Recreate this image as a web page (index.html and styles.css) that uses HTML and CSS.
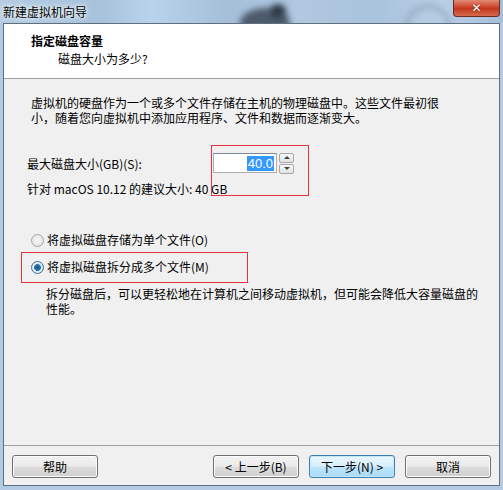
FILE: index.html
```html
<!DOCTYPE html>
<html lang="zh">
<head>
<meta charset="utf-8">
<title>新建虚拟机向导</title>
<link rel="stylesheet" href="styles.css">
</head>
<body>
<div class="app">
  <div class="titlebar">
    <span class="title">新建虚拟机向导</span>
    <div class="blob b1"></div>
    <div class="blob b2"></div>
    <div class="blob b3"></div>
    <div class="close"><span>✕</span></div>
  </div>
  <div class="window">
    <div class="header">
      <div class="h-title">指定磁盘容量</div>
      <div class="h-sub">磁盘大小为多少?</div>
    </div>
    <div class="body">
      <p class="intro">虚拟机的硬盘作为一个或多个文件存储在主机的物理磁盘中。这些文件最初很<br>小，随着您向虚拟机中添加应用程序、文件和数据而逐渐变大。</p>
      <div class="size-row">
        <span class="label">最大磁盘大小(GB)(S):</span>
        <div class="spin">
          <div class="spin-input"><span class="sel">40.0</span></div>
          <div class="spin-btns">
            <div class="sbtn"><span class="tri up"></span></div>
            <div class="sbtn"><span class="tri down"></span></div>
          </div>
        </div>
      </div>
      <div class="hint">针对 macOS 10.12 的建议大小: 40 GB</div>
      <div class="radio r1"><span class="dot"></span>将虚拟磁盘存储为单个文件(O)</div>
      <div class="radio r2"><span class="dot on"></span>将虚拟磁盘拆分成多个文件(M)</div>
      <p class="desc">拆分磁盘后，可以更轻松地在计算机之间移动虚拟机，但可能会降低大容量磁盘的<br>性能。</p>
    </div>
    <div class="footer">
      <button class="btn help">帮助</button>
      <div class="spacer"></div>
      <button class="btn">&lt; 上一步(B)</button>
      <button class="btn primary">下一步(N) &gt;</button>
      <button class="btn">取消</button>
    </div>
  </div>
  <div class="mark m1"></div>
  <div class="mark m2"></div>
</div>
</body>
</html>
```
FILE: styles.css
```css
html, body {
  margin: 0;
  padding: 0;
}
body {
  width: 503px;
  height: 490px;
  overflow: hidden;
  font-family: "Noto Sans CJK SC", "Liberation Sans", sans-serif;
  font-size: 12px;
  color: #000;
}
.app {
  position: relative;
  width: 503px;
  height: 490px;
  display: flex;
  flex-direction: column;
  background: #b3cbe2;
}
.titlebar {
  position: relative;
  height: 23px;
  flex: none;
  background: linear-gradient(90deg, #b5cce2 0%, #a8c2dc 20%, #b9d3ec 30%, #a5bfd9 45%, #b0c8e0 60%, #a9c3dc 75%, #b8cfe6 88%, #a6bfd8 100%);
  overflow: hidden;
}
.title {
  position: absolute;
  left: 3px;
  top: 3px;
  line-height: 18px;
  font-size: 12px;
  color: #000;
  text-shadow: 0 0 6px #fff, 0 0 4px #fff;
  z-index: 2;
}
.blob {
  position: absolute;
  border-radius: 50%;
  filter: blur(3px);
}
.b1 { left: 240px; top: 8px; width: 50px; height: 30px; background: #4d5b6c; }
.b2 { left: 270px; top: 4px; width: 16px; height: 14px; background: #2f3a48; }
.b3 { left: 405px; top: 5px; width: 40px; height: 40px; background: transparent; border: 3px solid #8aa0b5; }
.close {
  position: absolute;
  right: 3px;
  top: -3px;
  width: 45px;
  height: 19px;
  border: 1px solid #6b2a22;
  border-top: none;
  border-radius: 0 0 4px 4px;
  background: linear-gradient(180deg, #e8a796 0%, #d4553c 45%, #c2381f 60%, #d66a4d 100%);
  display: flex;
  align-items: center;
  justify-content: center;
  z-index: 2;
}
.close span {
  color: #fff;
  font-family: "DejaVu Sans", sans-serif;
  font-size: 12px;
  font-weight: bold;
  line-height: 12px;
  margin-top: 3px;
  text-shadow: 0 0 2px #602015;
}
.window {
  flex: 1;
  margin: 0 3px 4px 3px;
  display: flex;
  flex-direction: column;
  border: 1px solid #5e6f80;
  background: #f0f0f0;
}
.header {
  height: 55px;
  flex: none;
  background: #fff;
  border-bottom: 1px solid #a0a0a0;
  box-sizing: border-box;
  padding: 8px 0 0 27px;
}
.h-title {
  font-weight: bold;
  line-height: 17px;
  font-size: 12px;
}
.h-sub {
  padding-left: 27px;
  line-height: 18px;
  margin-top: 1px;
}
.body {
  flex: 1;
  padding: 16px 0 0 27px;
  display: flex;
  flex-direction: column;
  align-items: flex-start;
}
.intro, .desc {
  margin: 0;
  line-height: 15px;
}
.size-row {
  margin: 28px 0 0 -4px;
  display: flex;
  align-items: center;
  height: 20px;
}
.label {
  width: 186px;
  line-height: 15px;
}
.spin {
  display: flex;
  align-items: center;
  gap: 2px;
}
.spin-input {
  width: 60px;
  height: 18px;
  border: 1px solid #abadb3;
  border-top-color: #7a8897;
  background: #fff;
  display: flex;
  align-items: center;
  justify-content: flex-end;
  padding-right: 2px;
  box-sizing: content-box;
}
.sel {
  background: #3399ff;
  color: #fff;
  line-height: 15px;
  padding: 0 1px;
  font-family: "Liberation Sans", sans-serif;
  font-size: 13px;
}
.spin-btns {
  display: flex;
  flex-direction: column;
  gap: 1px;
}
.sbtn {
  width: 13px;
  height: 8px;
  border: 1px solid #a8a8a8;
  border-radius: 2px;
  background: linear-gradient(180deg, #f8f8f8, #e2e2e2);
  display: flex;
  align-items: center;
  justify-content: center;
}
.tri {
  width: 0;
  height: 0;
  border-left: 3px solid transparent;
  border-right: 3px solid transparent;
}
.tri.up { border-bottom: 3px solid #444; }
.tri.down { border-top: 3px solid #444; }
.hint {
  margin: 8px 0 0 -4px;
  line-height: 16px;
}
.radio {
  display: flex;
  align-items: center;
  line-height: 16px;
}
.r1 { margin-top: 35px; }
.r2 { margin-top: 11px; }
.dot {
  width: 11px;
  height: 11px;
  border-radius: 50%;
  border: 1px solid #a5a5a5;
  background: radial-gradient(circle, #f4f4f4 0%, #e2e2e2 100%);
  margin-right: 3px;
  box-sizing: content-box;
  display: inline-block;
}
.dot.on {
  border-color: #3c6d8f;
  background: radial-gradient(circle, #1d4f79 0%, #2a7bb6 40%, #dbe7f0 48%, #f3f3f3 100%);
}
.desc {
  margin-top: 11px;
  padding-left: 15px;
}
.footer {
  flex: none;
  height: 40px;
  border-top: 1px solid #a0a0a0;
  display: flex;
  align-items: flex-start;
  padding: 9px 8px 0 8px;
  box-sizing: border-box;
  gap: 10px;
}
.spacer { flex: 1; }
.btn {
  width: 86px;
  height: 23px;
  border: 1px solid #707070;
  border-radius: 3px;
  background: linear-gradient(180deg, #f2f2f2 0%, #ebebeb 48%, #dddddd 52%, #cfcfcf 100%);
  font-family: "Noto Sans CJK SC", "Liberation Sans", sans-serif;
  font-size: 12px;
  color: #000;
  padding: 0;
  line-height: 20px;
  box-shadow: inset 0 0 0 1px #fcfcfc;
}
.btn.primary {
  border-color: #3c7fb1;
  background: linear-gradient(180deg, #eaf6fd 0%, #d9f0fc 48%, #bee6fd 52%, #a7d9f5 100%);
  box-shadow: inset 0 0 0 1px #c6e7f8;
}
.mark {
  position: absolute;
  pointer-events: none;
  z-index: 5;
  box-shadow: inset 0 0 0 1px #e4343e;
}
.m1 { left: 211px; top: 145px; width: 98px; height: 51px; }
.m2 { left: 21px; top: 252px; width: 227px; height: 31px; }
```
